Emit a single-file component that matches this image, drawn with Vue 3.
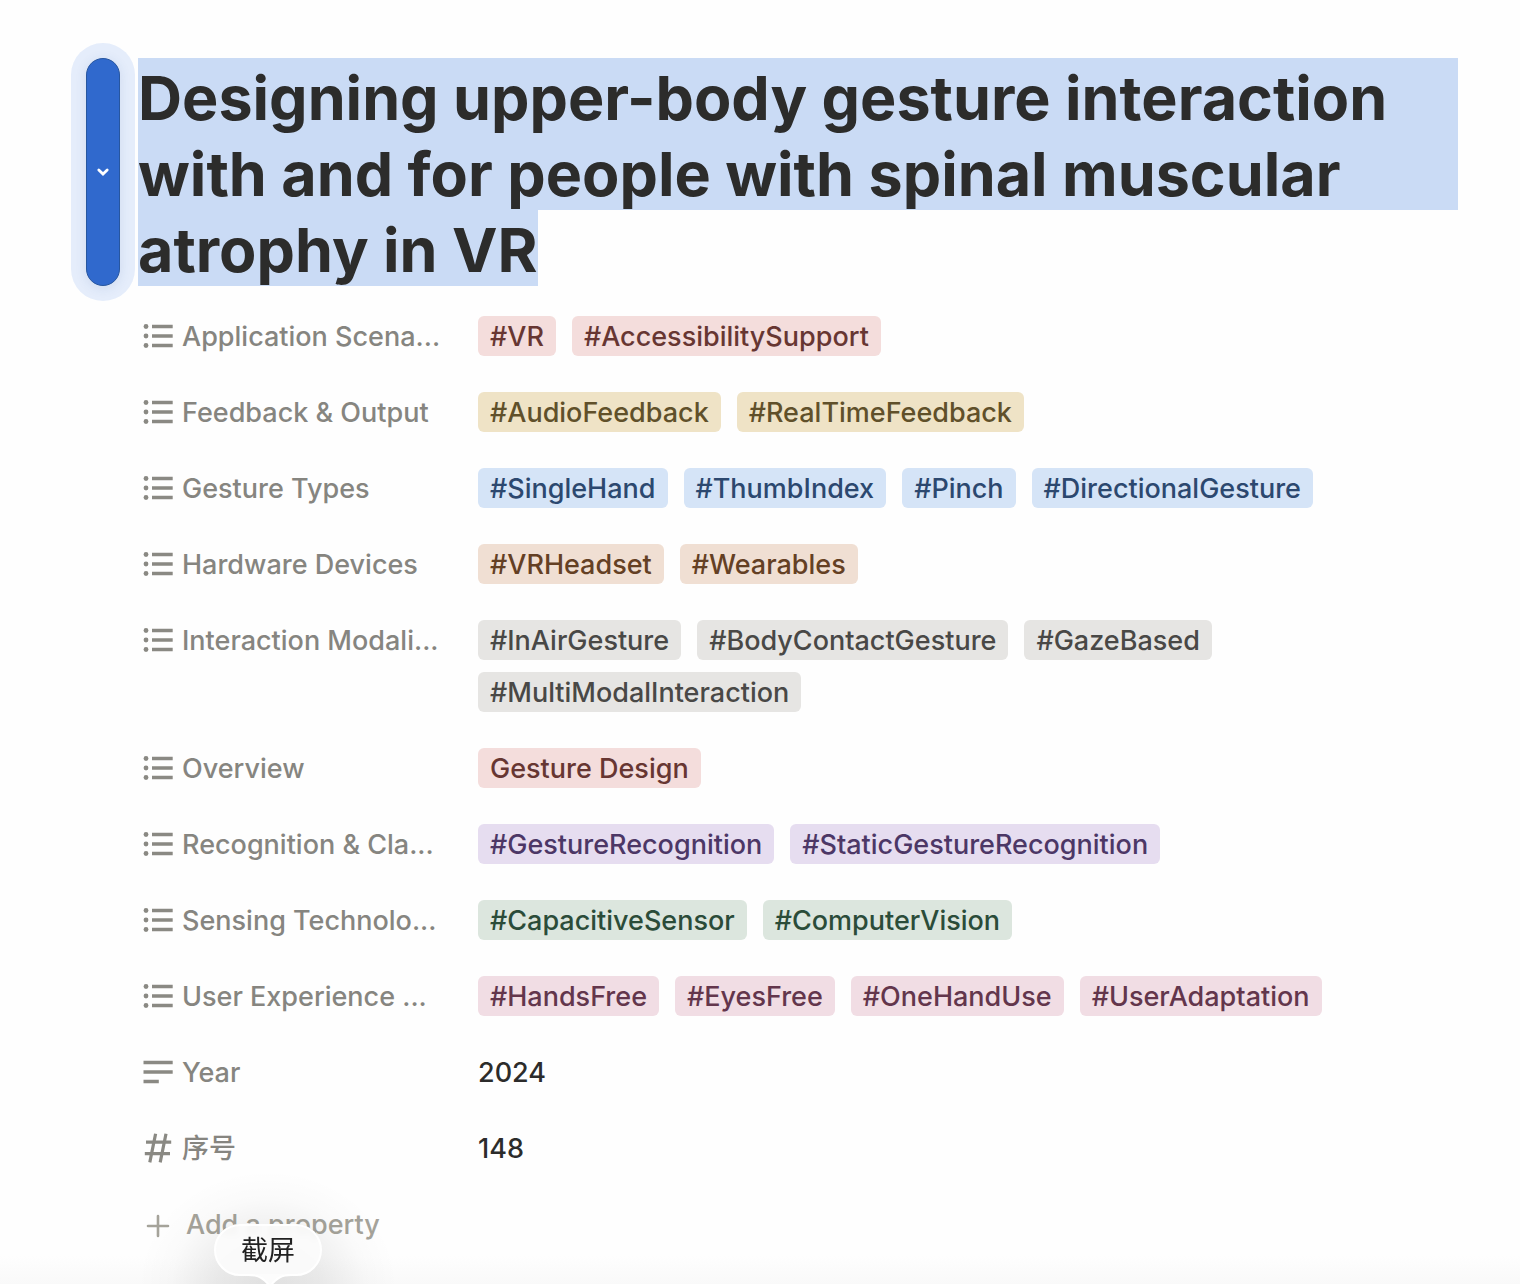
<script setup>
const titleLines = [
  { text: 'Designing upper-body gesture interaction', full: true },
  { text: 'with and for people with spinal muscular', full: true },
  { text: 'atrophy in VR', full: false },
]

const properties = [
  { name: 'Application Scena...', icon: 'list', color: 'red', tags: ['#VR', '#AccessibilitySupport'] },
  { name: 'Feedback & Output', icon: 'list', color: 'yellow', tags: ['#AudioFeedback', '#RealTimeFeedback'] },
  { name: 'Gesture Types', icon: 'list', color: 'blue', tags: ['#SingleHand', '#ThumbIndex', '#Pinch', '#DirectionalGesture'] },
  { name: 'Hardware Devices', icon: 'list', color: 'orange', tags: ['#VRHeadset', '#Wearables'] },
  { name: 'Interaction Modali...', icon: 'list', color: 'gray', tags: ['#InAirGesture', '#BodyContactGesture', '#GazeBased', '#MultiModalInteraction'] },
  { name: 'Overview', icon: 'list', color: 'red', tags: ['Gesture Design'] },
  { name: 'Recognition & Cla...', icon: 'list', color: 'purple', tags: ['#GestureRecognition', '#StaticGestureRecognition'] },
  { name: 'Sensing Technolo...', icon: 'list', color: 'green', tags: ['#CapacitiveSensor', '#ComputerVision'] },
  { name: 'User Experience ...', icon: 'list', color: 'pink', tags: ['#HandsFree', '#EyesFree', '#OneHandUse', '#UserAdaptation'] },
  { name: 'Year', icon: 'text', value: '2024' },
  { name: '序号', icon: 'number', value: '148' },
]
</script>

<template>
  <main class="page">
    <header class="heading">
      <button class="handle" type="button" aria-label="Title options">
        <svg width="14" height="10" viewBox="0 0 14 10" aria-hidden="true">
          <path d="M2.8 3 7 7 11.2 3" fill="none" stroke="#fff" stroke-width="2.8" stroke-linecap="round" stroke-linejoin="miter" />
        </svg>
      </button>
      <h1 class="title">
        <span v-for="line in titleLines" :key="line.text" class="line" :class="{ full: line.full }">{{ line.text }}</span>
      </h1>
    </header>

    <dl class="properties">
      <div v-for="p in properties" :key="p.name" class="property">
        <dt class="name">
          <svg class="icon" viewBox="0 0 32 32" aria-hidden="true">
            <g v-if="p.icon === 'list'">
              <circle cx="4" cy="6.5" r="2.4" /><circle cx="4" cy="16" r="2.4" /><circle cx="4" cy="25.5" r="2.4" />
              <path d="M10 4.7h20.7v3.5H10zM10 14.3h20.7v3.5H10zM10 23.8h20.7v3.5H10z" />
            </g>
            <path v-else-if="p.icon === 'text'" d="M1.5 4.7h29.2v3.5H1.5zM1.5 14.3h29.2v3.5H1.5zM1.5 23.8h15.3v3.5H1.5z" />
            <path v-else d="M13.6 1.8 7.8 30.4M24 1.8 18.2 30.4M4 10.2H29.2M2.8 21.6H28" fill="none" stroke="#8a8983" stroke-width="3.2" />
          </svg>
          <span class="text">{{ p.name }}</span>
        </dt>
        <dd class="value">
          <template v-if="p.tags">
            <span v-for="tag in p.tags" :key="tag" class="text tag" :class="p.color">{{ tag }}</span>
          </template>
          <span v-else class="text">{{ p.value }}</span>
        </dd>
      </div>
    </dl>

    <div class="footer">
      <button class="add" type="button">
        <svg class="icon" viewBox="0 0 32 32" aria-hidden="true">
          <path d="M16 8v20M6 18h20" fill="none" stroke="#a5a39a" stroke-width="2.6" stroke-linecap="round" />
        </svg>
        <span class="text">Add a property</span>
      </button>
      <div class="glow"></div>
      <div class="tooltip" role="tooltip">
        截屏
        <svg class="pointer" width="44" height="12" viewBox="0 0 44 12" aria-hidden="true">
          <path d="M0 0C11 0 15 4 22 12 29 4 33 0 44 0Z" fill="#fcfcfc" />
          <path d="M0 1C11 1 15 4 22 12 29 4 33 1 44 1" fill="none" stroke="#fff" stroke-width="2" />
        </svg>
      </div>
    </div>
  </main>
</template>

<style>
body {
  margin: 0;
  background: #fff;
}
</style>

<style scoped>
.page {
  box-sizing: border-box;
  min-height: 100vh;
  padding: 58px 62px 0 86px;
  overflow: hidden;
  font-family: Inter, "Noto Sans CJK SC", sans-serif;
  font-size: 27px;
  font-weight: 500;
  line-height: 38px;
  color: #2c2c2b;
  background: linear-gradient(to top, #f9f9f9, #fefefe 28px);
}
.heading {
  display: flex;
  gap: 18px;
}
.handle {
  display: flex;
  flex: none;
  align-items: center;
  justify-content: center;
  width: 34px;
  padding: 0;
  border: 1px solid #27569f;
  border-radius: 17px;
  background: #3069cd;
  box-shadow: 0 2px 12px rgba(40, 80, 150, 0.12), 0 0 0 15px #e5edfb;
}
.title {
  flex: 1;
  margin: 0;
  font-size: 61px;
  line-height: 72px;
  font-weight: 700;
}
.line {
  display: table;
  padding-top: 4px;
  background: #cadbf5;
  white-space: nowrap;
}
.line.full {
  display: block;
}
.properties {
  display: flex;
  flex-direction: column;
  gap: 36px;
  margin: 30px 0 0 56px;
}
.property {
  display: flex;
}
.name {
  display: flex;
  flex: none;
  gap: 8px;
  width: 336px;
  color: #868580;
}
.icon {
  flex: none;
  width: 32px;
  height: 32px;
  margin-top: 4px;
  fill: #8a8983;
}
.value {
  display: flex;
  flex: 1;
  flex-wrap: wrap;
  gap: 12px 16px;
  margin: 0;
}
.text {
  padding-top: 2px;
  white-space: nowrap;
}
.tag {
  padding-right: 12px;
  padding-left: 12px;
  border-radius: 6px;
}
.red { background: #f4dddc; color: #673632; }
.yellow { background: #efe3c6; color: #60502a; }
.blue { background: #d5e4f7; color: #2c486f; }
.orange { background: #f0dfd3; color: #644024; }
.gray { background: #e6e5e3; color: #494846; }
.purple { background: #e6ddf0; color: #4c3766; }
.green { background: #dce6de; color: #2b4c39; }
.pink { background: #f1dde4; color: #63364c; }
.footer {
  position: relative;
  margin: 36px 0 0 56px;
}
.add {
  display: flex;
  gap: 12px;
  padding: 0;
  border: 0;
  background: none;
  font: inherit;
  color: #a5a39a;
}
.glow {
  position: absolute;
  top: -34px;
  left: -4px;
  width: 260px;
  height: 230px;
  background: radial-gradient(closest-side, rgba(0, 0, 0, 0.1), rgba(0, 0, 0, 0.07) 40%, rgba(0, 0, 0, 0.015) 75%, transparent);
}
.tooltip {
  position: absolute;
  top: 20px;
  left: 72px;
  box-sizing: border-box;
  width: 108px;
  height: 52px;
  border: 2px solid #fff;
  border-radius: 26px;
  background: rgba(252, 252, 252, 0.9);
  backdrop-filter: blur(3px);
  font-weight: 400;
  line-height: 50px;
  text-align: center;
  color: #222;
}
.pointer {
  position: absolute;
  top: 48px;
  left: 32px;
}
</style>
